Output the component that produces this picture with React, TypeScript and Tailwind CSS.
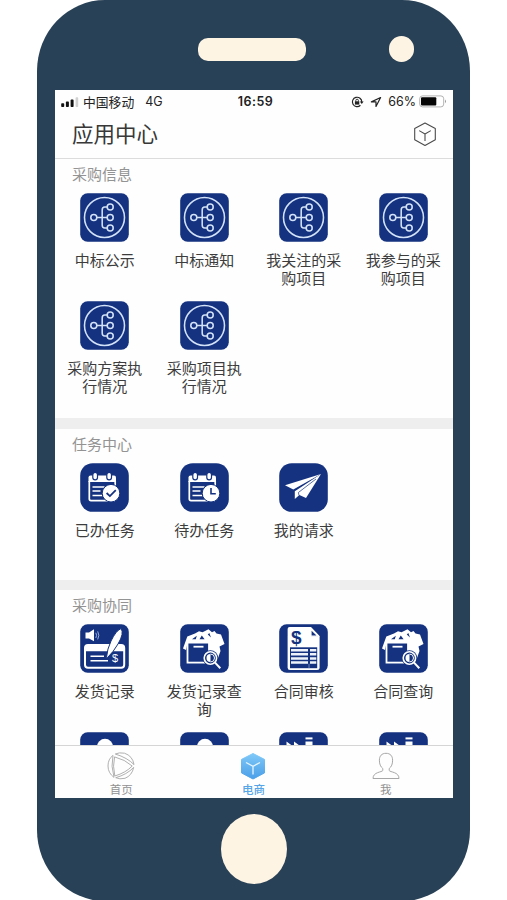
import type { ReactNode } from 'react';

const BLUE = '#14327f';

function Tile({ radius = 7.5, children }: { radius?: number; children: ReactNode }) {
  return (
    <svg viewBox="0 0 49 49" className="block h-[49px] w-[49px] shrink-0">
      <rect x="0.2" y="0.2" width="48.6" height="48.6" rx={radius} fill={BLUE} />
      {children}
    </svg>
  );
}

function TreeIcon() {
  return (
    <Tile>
      <g fill="none" stroke="#d3e2f8" strokeWidth="1.55">
        <circle cx="24.5" cy="24.5" r="20" />
        <circle cx="13.8" cy="24.5" r="3" />
        <circle cx="30.2" cy="14" r="3" />
        <circle cx="30.2" cy="24.5" r="3" />
        <circle cx="30.2" cy="35" r="3" />
        <path d="M16.8 24.5H27.2M27.2 14H24.7Q22.2 14 22.2 17V32Q22.2 35 24.7 35H27.2" />
      </g>
    </Tile>
  );
}

function CalendarBase({ children }: { children: ReactNode }) {
  return (
    <Tile radius={12.5}>
      <path d="M8.5 14.5Q8.5 12.5 10.5 12.5H34Q36 12.5 36 14.5V19H8.5Z" fill="#fff" />
      <path d="M9.3 18V36Q9.3 37.6 11 37.6H33.5Q35.2 37.6 35.2 36V18" fill="none" stroke="#fff" strokeWidth="1.7" />
      <g fill="#fff" stroke={BLUE} strokeWidth="1.2">
        <rect x="12.8" y="9.4" width="4.7" height="7.4" rx="2.35" />
        <rect x="26.8" y="9.4" width="4.7" height="7.4" rx="2.35" />
      </g>
      <path d="M12.5 24H24.5M12.5 28H20.5M12.5 32.5H22" stroke="#fff" strokeWidth="1.7" />
      <circle cx="31" cy="30.2" r="8.8" fill="#fff" stroke={BLUE} strokeWidth="1" />
      {children}
    </Tile>
  );
}

function DoneIcon() {
  return (
    <CalendarBase>
      <path d="M26.6 30L29.9 33.1L35.8 27.2" fill="none" stroke={BLUE} strokeWidth="1.8" />
    </CalendarBase>
  );
}

function PendingIcon() {
  return (
    <CalendarBase>
      <path d="M31 25V30.8H35.8" fill="none" stroke={BLUE} strokeWidth="1.6" />
    </CalendarBase>
  );
}

function PlaneIcon() {
  return (
    <Tile radius={12.5}>
      <path d="M42 11L6 22.3L14.3 26.4Z" fill="#fff" />
      <path d="M42 11L15.8 28.2V36L20.4 32L27 35Z" fill="#fff" />
      <path d="M37 16L19.4 29.5L20 32.4" fill="none" stroke={BLUE} strokeWidth="0.7" />
    </Tile>
  );
}

function RecordIcon() {
  return (
    <Tile>
      <path d="M5.5 8.5H9L14 5.3V17.2L9 14.4H5.5Z" fill="#fff" />
      <path d="M15.8 8.8Q17.4 11.3 15.8 14M17.7 7.4Q20 11.3 17.7 15.4" fill="none" stroke="#a9bce2" strokeWidth="0.9" />
      <rect x="5" y="21" width="39.2" height="22.8" rx="3" fill="none" stroke="#fff" strokeWidth="2" />
      <path d="M5 24Q5 21 8 21H41Q44.2 21 44.2 24V27.3H5Z" fill="#fff" />
      <path d="M10.5 32.3H24M10.5 36.8H28" stroke="#fff" strokeWidth="1.5" />
      <text x="35" y="38.3" fill="#fff" fontSize="11" textAnchor="middle" className="font-['Liberation_Sans',sans-serif]">$</text>
      <path d="M41 4.6Q44.5 9 38 20Q33.4 28 27.3 33.8L26.5 33.4Q27.2 25 31 17Q36 6.6 41 4.6Z" fill="#fff" stroke={BLUE} strokeWidth="1" />
    </Tile>
  );
}

function BoxSearchIcon() {
  return (
    <Tile>
      <path d="M3 24.5L7.3 12.5L15 9.5L19 7.2L22.5 8.3L28.5 5.2L32 8.3L34.5 7L36.5 9.5L41 10.5L44.5 20L39.5 22.5L40.5 27L38 34H29V19H7.5L6 26Z" fill="#fff" />
      <path d="M12 15.3L16.8 11.8L15.8 15.3ZM19.5 15.3L21.8 11.5L24.6 15.3ZM27.8 10.5L29.3 9L31 13.6Z" fill={BLUE} />
      <rect x="7.5" y="18.6" width="21.5" height="20" fill={BLUE} stroke="#fff" strokeWidth="1.8" />
      <path d="M13.5 22.7H23.5" stroke="#fff" strokeWidth="1.8" />
      <circle cx="30.4" cy="34" r="7.8" fill={BLUE} />
      <circle cx="30.4" cy="34" r="6.2" fill={BLUE} stroke="#fff" strokeWidth="1.6" />
      <path d="M30.5 30A4 4 0 0 0 30.5 38Z" fill="#fff" />
      <path d="M30.5 30A4 4 0 0 1 30.5 38" fill="none" stroke="#fff" strokeWidth="1" />
      <path d="M34.8 38.4L40.3 44.3" stroke="#fff" strokeWidth="2" />
    </Tile>
  );
}

function ContractIcon() {
  return (
    <Tile>
      <path d="M8.6 5Q8.6 3 10.6 3H32L40.6 12V43.5Q40.6 46 38 46H11Q8.6 46 8.6 43.5Z" fill="#fff" />
      <path d="M32 5.2V12.2H39.2Z" fill={BLUE} stroke="#fff" strokeWidth="1.2" />
      <text x="17.2" y="19.8" fill={BLUE} fontSize="19" fontWeight="700" textAnchor="middle" className="font-['Liberation_Sans',sans-serif]">$</text>
      <rect x="11" y="23.3" width="27.2" height="20.9" fill={BLUE} />
      <path d="M12 26.2H29M31 26.2H37.3M12 30.3H29M31 30.3H37.3M12 34.4H29M31 34.4H37.3M12 38.5H29M31 38.5H37.3" stroke="#eef3fb" strokeWidth="2.5" />
      <path d="M30 39.7V44.2" stroke="#8498c6" strokeWidth="0.8" />
    </Tile>
  );
}

function PersonIcon() {
  return (
    <Tile>
      <circle cx="25" cy="14.8" r="8" fill="#fff" />
      <path d="M9 42Q9 26 25 26T41 42Z" fill="#fff" />
    </Tile>
  );
}

function FactoryIcon() {
  return (
    <Tile>
      <path d="M7.5 42V9.5L15 15V9.5L22.5 15H26.5V9.6H33.5V42Z" fill="#fff" />
      <path d="M26.5 6.4H33.5" stroke="#fff" strokeWidth="2" />
    </Tile>
  );
}

interface AppItem {
  icon: ReactNode;
  label?: string;
}

const info: AppItem[] = [
  { icon: <TreeIcon />, label: '中标公示' },
  { icon: <TreeIcon />, label: '中标通知' },
  { icon: <TreeIcon />, label: '我关注的采购项目' },
  { icon: <TreeIcon />, label: '我参与的采购项目' },
  { icon: <TreeIcon />, label: '采购方案执行情况' },
  { icon: <TreeIcon />, label: '采购项目执行情况' },
];

const tasks: AppItem[] = [
  { icon: <DoneIcon />, label: '已办任务' },
  { icon: <PendingIcon />, label: '待办任务' },
  { icon: <PlaneIcon />, label: '我的请求' },
];

const cooperation: AppItem[] = [
  { icon: <RecordIcon />, label: '发货记录' },
  { icon: <BoxSearchIcon />, label: '发货记录查询' },
  { icon: <ContractIcon />, label: '合同审核' },
  { icon: <BoxSearchIcon />, label: '合同查询' },
  { icon: <PersonIcon /> },
  { icon: <PersonIcon /> },
  { icon: <FactoryIcon /> },
  { icon: <FactoryIcon /> },
];

function Section({ title, items }: { title: string; items: AppItem[] }) {
  return (
    <section>
      <h2 className="h-[34px] pl-[17px] pt-[5px] text-[15px] leading-[20px] text-[#939393]">{title}</h2>
      <div className="grid grid-cols-4">
        {items.map((item, i) => (
          <div key={i} className="flex h-[108.2px] flex-col items-center">
            {item.icon}
            {item.label && (
              <span className="mt-[9px] w-[78px] text-center text-[15px] leading-[18px] text-[#3c3c3c]">{item.label}</span>
            )}
          </div>
        ))}
      </div>
    </section>
  );
}

function StatusBar() {
  return (
    <div className="grid h-[23px] shrink-0 grid-cols-[1fr_auto_1fr] items-center pl-[6px] pr-[5px] text-[#222]">
      <div className="flex items-center">
        <svg viewBox="0 0 18 12" className="h-3 w-[18px]">
          <rect x="0.2" y="7.2" width="3" height="3.8" rx="0.8" fill="#111" />
          <rect x="4.9" y="5.6" width="3" height="5.4" rx="0.8" fill="#111" />
          <rect x="9.6" y="3.6" width="3" height="7.4" rx="0.8" fill="#111" />
          <rect x="14.6" y="1.2" width="2.6" height="9.8" rx="0.8" fill="#d0d0d0" />
        </svg>
        <span className="ml-[4px] text-[12.8px] leading-4">中国移动</span>
        <span className="ml-[11px] font-['Inter','Liberation_Sans',sans-serif] text-[12.5px] leading-4">4G</span>
      </div>
      <span className="pl-[2px] font-['Inter','Liberation_Sans',sans-serif] text-[12.5px] font-semibold leading-4 tracking-[0.5px]">16:59</span>
      <div className="flex items-center justify-end">
        <svg viewBox="0 0 13 12" className="h-3 w-[13px]" fill="none" stroke="#222">
          <path d="M9.4 9.3A4.7 4.7 0 1 1 10.8 6" strokeWidth="1.2" />
          <path d="M8.8 5.6H12.6L10.8 8Z" fill="#222" stroke="none" />
          <path d="M4.8 5.6V4.5Q4.8 3.2 6.1 3.2T7.4 4.5V5.6" strokeWidth="0.9" />
          <rect x="3.9" y="5.3" width="4.4" height="3.3" fill="#222" stroke="none" />
        </svg>
        <svg viewBox="0 0 12 12" className="ml-[6px] h-3 w-3" fill="none" stroke="#222" strokeWidth="1.2" strokeLinejoin="round">
          <path d="M10.6 1.5L1.4 5.9H6V10.5Z" />
        </svg>
        <span className="ml-[6px] font-['Inter','Liberation_Sans',sans-serif] text-[12.5px] leading-4">66%</span>
        <svg viewBox="0 0 29 13" className="ml-[3px] h-[13px] w-[29px]">
          <rect x="0.7" y="0.9" width="24" height="11" rx="2.8" fill="#fff" stroke="#aaa" strokeWidth="0.9" />
          <rect x="2" y="2.3" width="15.3" height="8.2" rx="1" fill="#050505" />
          <path d="M26 4.5Q28 6.4 26 8.3Z" fill="#999" />
        </svg>
      </div>
    </div>
  );
}

function TabItem({ label, active, children }: { label: string; active?: boolean; children: ReactNode }) {
  return (
    <div className="flex flex-1 flex-col items-center pt-[6px]">
      {children}
      <span className={active ? 'mt-[2px] text-[11.5px] font-medium leading-[14px] text-[#56a5e8]' : 'mt-[2px] text-[11.5px] leading-[14px] text-[#929292]'}>
        {label}
      </span>
    </div>
  );
}

export default function App() {
  return (
    <div className="flex h-[900px] w-[507px] justify-center overflow-hidden bg-white font-['Noto_Sans_CJK_SC',sans-serif]">
      <div className="flex h-[901px] w-[433px] shrink-0 flex-col items-center rounded-[68px/71px] bg-[#284156]">
        <div className="grid h-[90px] w-full shrink-0 grid-cols-[1fr_108px_1fr] items-center pr-[3px] pt-[8px]">
          <span />
          <span className="h-[23px] rounded-[10px] bg-[#fef4e4]" />
          <span className="ml-[83px] h-[26px] w-[25px] rounded-full bg-[#fef4e4]" />
        </div>

        <main className="ml-px flex h-[708px] w-[398px] shrink-0 flex-col overflow-hidden bg-[#fefefe]">
          <StatusBar />
          <header className="flex h-[46px] shrink-0 items-center justify-between border-b border-[#dcdcdc] pl-[17px] pr-[16px]">
            <h1 className="-mt-[5px] text-[21.5px] leading-7 text-[#383838]">应用中心</h1>
            <svg viewBox="0 0 24 26" className="-mt-[3px] h-[26px] w-6" fill="none" stroke="#4b4b4b" strokeWidth="1.1" strokeLinejoin="round">
              <path d="M12 2L22.3 7.6V18.8L12 24.5L1.7 18.8V7.6Z" />
              <path d="M6.2 9.6L12 13L17.8 9.6M12 13V20" />
            </svg>
          </header>

          <div className="min-h-0 flex-1 overflow-hidden">
            <div className="h-[259px]">
              <Section title="采购信息" items={info} />
            </div>
            <div className="h-[11px] bg-[#eeeeee]" />
            <div className="h-[151px]">
              <Section title="任务中心" items={tasks} />
            </div>
            <div className="h-[10px] bg-[#eeeeee]" />
            <Section title="采购协同" items={cooperation} />
          </div>

          <nav className="flex h-[53px] shrink-0 border-t border-[#d5d5d5] pr-px">
            <TabItem label="首页">
              <svg viewBox="0 0 28 28" className="h-7 w-7" fill="none" stroke="#a7a7a7" strokeWidth="0.9">
                <path d="M6 3.4Q1 7 1 14T7 25.4Q3.6 14 6 3.4Z" />
                <path d="M8.3 2Q12 0.2 17.5 1.2Q25.7 4 27 12.6Q20.5 5.8 8.3 2Z" />
                <path d="M26.7 15.4Q25 23.5 18 26.3Q12.5 27.6 8.7 25.7Q19.8 22.6 26.7 15.4Z" />
                <path d="M7.6 4.9Q18 7.5 25.2 14Q19 20.6 7.8 24Q5.4 14 7.6 4.9Z" />
              </svg>
            </TabItem>
            <TabItem label="电商" active>
              <svg viewBox="0 0 28 28" className="h-7 w-7">
                <defs>
                  <linearGradient id="cube" x1="0" y1="0" x2="0" y2="1">
                    <stop offset="0" stopColor="#7fc8f8" />
                    <stop offset="1" stopColor="#4a9fe8" />
                  </linearGradient>
                </defs>
                <path d="M14 1.5L25.5 7.4V20.9L14 27L2.5 20.9V7.4Z" fill="url(#cube)" stroke="url(#cube)" strokeWidth="1" strokeLinejoin="round" />
                <path d="M7 10.5L14 14.3L21 10.5M14 14.3V22.5" fill="none" stroke="#e6f5ff" strokeWidth="1.3" />
              </svg>
            </TabItem>
            <TabItem label="我">
              <svg viewBox="0 0 28 28" className="h-7 w-7" fill="none" stroke="#a7a7a7" strokeWidth="1" strokeLinejoin="round">
                <path d="M14 1.3C9.7 1.3 7.4 4 7.4 8.2C7.4 12 8.5 14.8 10.8 16.5V18.5C10 20.3 1 19.8 1 26.5H27C27 19.8 18 20.3 17.2 18.5V16.5C19.5 14.8 20.6 12 20.6 8.2C20.6 4 18.3 1.3 14 1.3Z" />
              </svg>
            </TabItem>
          </nav>
        </main>

        <div className="mt-4 h-[70px] w-[66px] shrink-0 rounded-[50%] bg-[#fef4e4]" />
      </div>
    </div>
  );
}
